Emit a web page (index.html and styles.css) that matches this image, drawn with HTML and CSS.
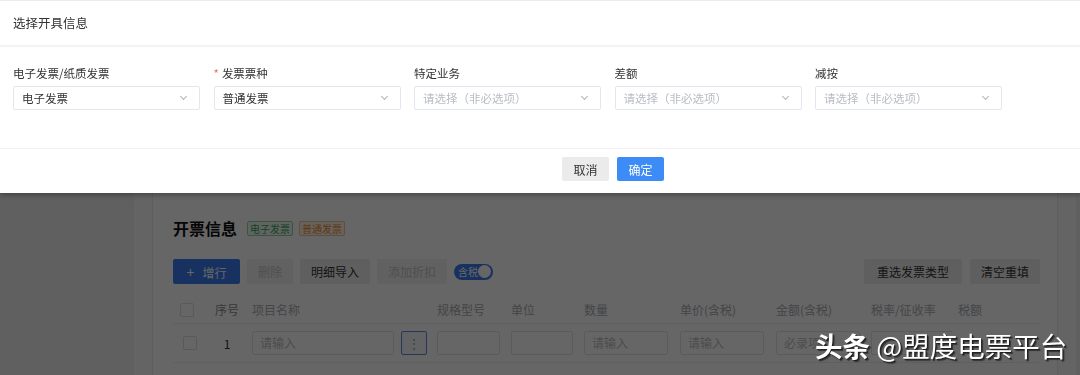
FILE: index.html
```html
<!DOCTYPE html>
<html lang="zh-CN">
<head>
    <meta charset="UTF-8">
    <meta name="viewport" content="width=device-width, initial-scale=1.0">
    <title>开票信息</title>
    <link rel="stylesheet" href="styles.css">
</head>
<body>
    <div class="main">
        <div class="card">
            <div class="card-title">
                <h3>开票信息</h3>
                <span class="tag tag-green">电子发票</span>
                <span class="tag tag-orange">普通发票</span>
            </div>

            <div class="toolbar">
                <button class="btn btn-primary"><span class="plus">+</span>增行</button>
                <button class="btn btn-disabled">删除</button>
                <button class="btn">明细导入</button>
                <button class="btn btn-disabled">添加折扣</button>
                <span class="switch"><span>含税</span><i></i></span>
                <div class="toolbar-right">
                    <button class="btn btn-wide">重选发票类型</button>
                    <button class="btn">清空重填</button>
                </div>
            </div>

            <div class="grid grid-head">
                <div class="cell cell-check"><span class="checkbox"></span></div>
                <div class="cell cell-no">序号</div>
                <div class="cell">项目名称</div>
                <div class="cell">规格型号</div>
                <div class="cell">单位</div>
                <div class="cell">数量</div>
                <div class="cell">单价(含税)</div>
                <div class="cell">金额(含税)</div>
                <div class="cell">税率/征收率</div>
                <div class="cell">税额</div>
            </div>
            <div class="grid grid-row">
                <div class="cell cell-check"><span class="checkbox"></span></div>
                <div class="cell cell-no">1</div>
                <div class="cell cell-name">
                    <span class="input input-name">请输入</span>
                    <span class="more-btn">⋮</span>
                </div>
                <div class="cell"><span class="input input-spec"></span></div>
                <div class="cell"><span class="input input-unit"></span></div>
                <div class="cell"><span class="input">请输入</span></div>
                <div class="cell"><span class="input">请输入</span></div>
                <div class="cell"><span class="input">必录项</span></div>
                <div class="cell"><span class="input"></span></div>
                <div class="cell"></div>
            </div>
        </div>
    </div>

    <div class="mask"></div>

    <div class="drawer">
        <div class="drawer-header">选择开具信息</div>
        <div class="drawer-body">
            <div class="field">
                <label>电子发票/纸质发票</label>
                <div class="select">电子发票<span class="arrow"></span></div>
            </div>
            <div class="field">
                <label><em>*</em>发票票种</label>
                <div class="select">普通发票<span class="arrow"></span></div>
            </div>
            <div class="field">
                <label>特定业务</label>
                <div class="select placeholder">请选择（非必选项）<span class="arrow"></span></div>
            </div>
            <div class="field">
                <label>差额</label>
                <div class="select placeholder">请选择（非必选项）<span class="arrow"></span></div>
            </div>
            <div class="field">
                <label>减按</label>
                <div class="select placeholder">请选择（非必选项）<span class="arrow"></span></div>
            </div>
        </div>
        <div class="drawer-footer">
            <button class="dbtn">取消</button>
            <button class="dbtn dbtn-primary">确定</button>
        </div>
    </div>

    <div class="watermark"><b>头条</b> @盟度电票平台</div>
</body>
</html>
```

FILE: styles.css
```css
body {
    margin: 0;
    background-color: #f0f1f3;
    font-family: "Noto Sans CJK SC", "Noto Sans", sans-serif;
    font-size: 12px;
    color: #333;
    overflow: hidden;
}
button {
    font-family: inherit;
}

/* page behind the drawer */
.main {
    margin-left: 134px;
    width: 906px;
    padding: 120px 18px 40px 18px;
    background-color: #fbfbfb;
}
.card {
    background-color: #fff;
    border: 1px solid #ececec;
    padding: 95px 17px 30px 20px;
}
.card-title {
    display: flex;
    align-items: center;
    height: 24px;
}
.card-title h3 {
    margin: 0 10px 0 0;
    font-size: 16px;
    font-weight: bold;
    color: #111;
}
.tag {
    font-size: 10px;
    line-height: 13px;
    padding: 0 2px;
    margin-right: 6px;
    border: 1px solid;
    border-radius: 2px;
}
.tag-green {
    color: #3aa35f;
    border-color: #8fd3a6;
    background-color: #eefaf2;
}
.tag-orange {
    color: #f08a2c;
    border-color: #f7c08f;
    background-color: #fff5ec;
}
.toolbar {
    display: flex;
    align-items: center;
    gap: 7px;
    margin-top: 19px;
}
.btn {
    height: 25px;
    padding: 0 11px;
    border: none;
    border-radius: 2px;
    background-color: #eeeeee;
    color: #333;
    font-size: 12px;
}
.btn-primary {
    width: 67px;
    background-color: #3a7bf2;
    color: #fff;
}
.btn-primary .plus {
    margin-right: 8px;
    font-size: 14px;
}
.btn-disabled {
    background-color: #f3f3f3;
    color: #c6c6c6;
}
.btn-wide {
    padding: 0 13px;
}
.switch {
    display: flex;
    align-items: center;
    justify-content: space-between;
    width: 39px;
    height: 16px;
    box-sizing: border-box;
    padding: 0 2px 0 4px;
    border-radius: 8px;
    background-color: #3a7bf2;
    color: #fff;
    font-size: 10px;
}
.switch i {
    width: 13px;
    height: 13px;
    border-radius: 50%;
    background-color: #fff;
}
.toolbar-right {
    display: flex;
    gap: 8px;
    margin-left: auto;
}
.grid {
    display: grid;
    grid-template-columns: 34px 40px 185px 74px 73px 96px 96px 95px 87px 87px;
    align-items: center;
    border-bottom: 1px solid #ebeef5;
}
.grid-head {
    height: 27px;
    margin-top: 12px;
    color: #a9acb2;
}
.grid-row {
    height: 38px;
}
.cell {
    padding-left: 5px;
    white-space: nowrap;
    overflow: hidden;
}
.cell-check {
    padding-left: 7px;
}
.cell-no {
    padding-left: 0;
    text-align: center;
}
.grid-head .cell-no {
    color: #8c8c8c;
}
.grid-row .cell-check {
    padding-left: 10px;
}
.checkbox {
    display: block;
    width: 12px;
    height: 12px;
    border: 1px solid #dcdfe6;
    border-radius: 2px;
    background-color: #fff;
}
.cell-name {
    display: flex;
    align-items: center;
    gap: 7px;
}
.input {
    display: block;
    width: 84px;
    height: 24px;
    box-sizing: border-box;
    padding-left: 7px;
    border: 1px solid #e2e4ea;
    border-radius: 2px;
    line-height: 22px;
    color: #bbbec4;
}
.input-name {
    width: 142px;
}
.input-spec {
    width: 63px;
}
.input-unit {
    width: 62px;
}
.more-btn {
    width: 26px;
    height: 24px;
    box-sizing: border-box;
    border: 1px solid #5d87d9;
    border-radius: 2px;
    background-color: #f6f7fa;
    text-align: center;
    line-height: 22px;
    color: #999;
}

/* mask + drawer */
.mask {
    position: fixed;
    top: 0;
    left: 0;
    right: 0;
    bottom: 0;
    background-color: rgba(0, 0, 0, 0.6);
}
.drawer {
    position: fixed;
    top: 0;
    left: 0;
    right: 0;
    height: 193px;
    background-color: #fff;
    box-shadow: 0 2px 5px rgba(0, 0, 0, 0.3);
}
.drawer-header {
    height: 44px;
    line-height: 44px;
    padding-left: 13px;
    border-top: 1px solid #ececec;
    border-bottom: 2px solid #f3f3f3;
    font-size: 12.5px;
    color: #333;
}
.drawer-body {
    display: flex;
    gap: 13.5px;
    height: 102px;
    box-sizing: border-box;
    padding: 18px 0 0 13px;
    border-bottom: 1px solid #f0f0f0;
    font-size: 11.5px;
}
.field {
    width: 187px;
}
.field label {
    display: block;
    line-height: 16px;
    margin-bottom: 5px;
    color: #333;
}
.field label em {
    color: #f56c6c;
    font-style: normal;
    margin-right: 3px;
}
.select {
    position: relative;
    height: 24px;
    box-sizing: border-box;
    padding-left: 8px;
    border: 1px solid #e4e7ed;
    border-radius: 2px;
    line-height: 22px;
    color: #333;
}
.select.placeholder {
    color: #b8bcc4;
}
.select .arrow {
    position: absolute;
    right: 13px;
    top: 7px;
    width: 4px;
    height: 4px;
    border-right: 1px solid #b4b4b4;
    border-bottom: 1px solid #b4b4b4;
    transform: rotate(45deg);
}
.drawer-footer {
    display: flex;
    justify-content: center;
    gap: 8px;
    padding: 8px 0 0 146px;
}
.dbtn {
    width: 47px;
    height: 24px;
    border: none;
    border-radius: 2px;
    background-color: #ebebeb;
    color: #333;
    font-size: 12px;
}
.dbtn-primary {
    background-color: #3d8bf6;
    color: #fff;
}

.watermark {
    position: fixed;
    left: 815px;
    top: 328px;
    font-size: 27.5px;
    line-height: 34px;
    color: #fff;
    text-shadow: 1px 1px 0 #222, 2px 2px 1px #333;
}
.watermark b {
    font-weight: bold;
}
```
